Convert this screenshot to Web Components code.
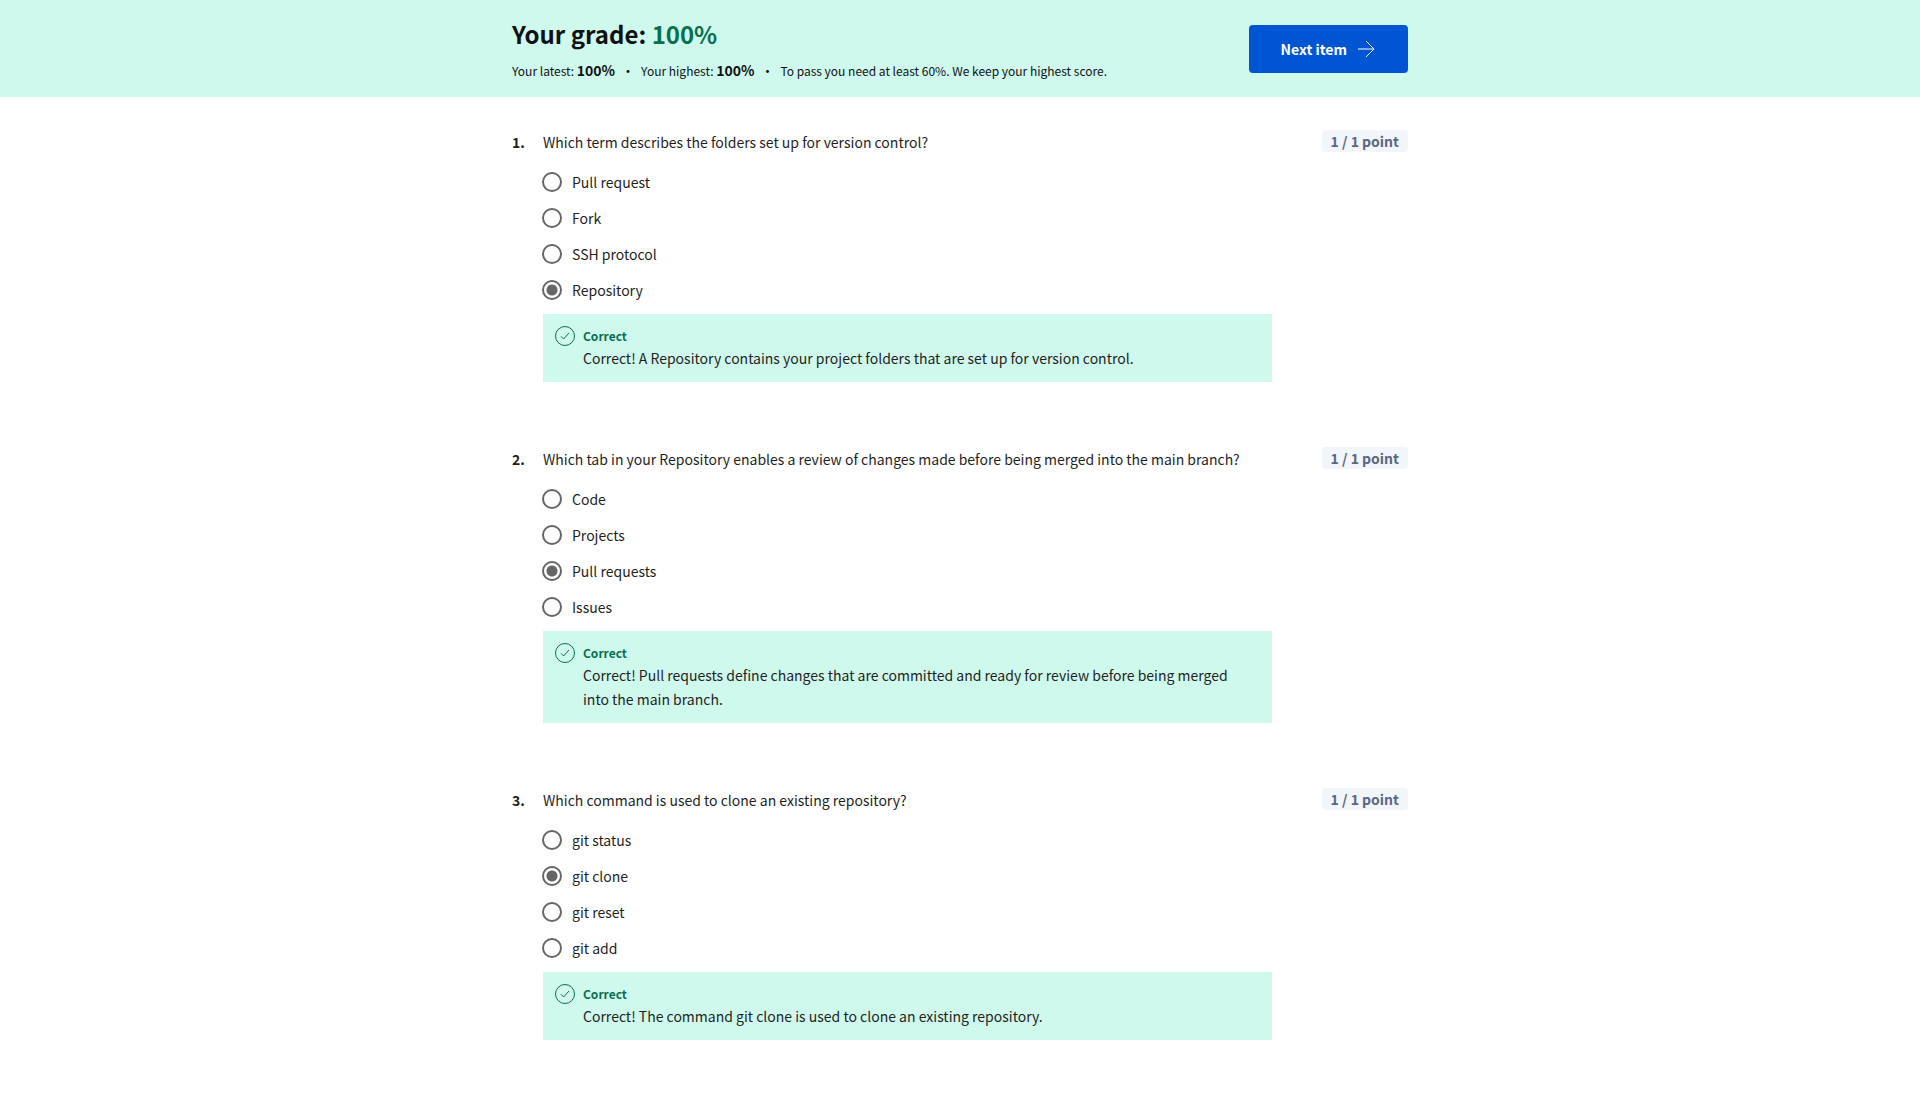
<!DOCTYPE html>
<html lang="en">
<head>
<meta charset="utf-8">
<title>Your grade: 100%</title>
<style>
  body {
    margin: 0;
    background: #fff;
    color: #1f1f1f;
    font: 14px/24px "Noto Sans CJK SC", "Noto Sans", sans-serif;
    --mint: #d0f9ed;
    --green: #087051;
    --ink: #0f1114;
    --blue: #0056d2;
    --page: 896px;
  }
  grade-header strong { font-size: 14px; line-height: 16px; }
</style>
</head>
<body>
<grade-header grade="100%">
  <span>Your latest: <strong>100%</strong></span>
  <span>Your highest: <strong>100%</strong></span>
  <span>To pass you need at least 60%. We keep your highest score.</span>
</grade-header>
<quiz-list>
  <quiz-question number="1" prompt="Which term describes the folders set up for version control?" options="Pull request|Fork|SSH protocol|Repository" selected="Repository">
    <quiz-feedback>Correct! A Repository contains your project folders that are set up for version control.</quiz-feedback>
  </quiz-question>
  <quiz-question number="2" prompt="Which tab in your Repository enables a review of changes made before being merged into the main branch?" options="Code|Projects|Pull requests|Issues" selected="Pull requests">
    <quiz-feedback>Correct! Pull requests define changes that are committed and ready for review before being merged into the main branch.</quiz-feedback>
  </quiz-question>
  <quiz-question number="3" prompt="Which command is used to clone an existing repository?" options="git status|git clone|git reset|git add" selected="git clone">
    <quiz-feedback>Correct! The command git clone is used to clone an existing repository.</quiz-feedback>
  </quiz-question>
</quiz-list>

<script>
class GradeHeader extends HTMLElement {
  connectedCallback() {
    const root = this.attachShadow({ mode: 'open' });
    root.innerHTML = `
      <style>
        :host { display: block; background: var(--mint); color: var(--ink); }
        header { display: flex; flex-wrap: wrap; align-items: center; justify-content: space-between; gap: 16px; max-width: var(--page); margin: 0 auto; padding: 16px 0 15px; }
        h1 { margin: 0; font-size: 24px; line-height: 36px; font-weight: 700; }
        h1 b { color: var(--green); font-weight: 700; }
        .facts { display: flex; flex-wrap: wrap; margin-top: 8px; font-size: 12px; line-height: 22px; }
        ::slotted(span:not(:first-child))::before { content: "•"; margin: 0 6px; font-size: 14px; line-height: 16px; }
      </style>
      <header>
        <div>
          <h1>Your grade: <b></b></h1>
          <div class="facts"><slot></slot></div>
        </div>
        <next-button>Next item</next-button>
      </header>`;
    root.querySelector('b').textContent = this.getAttribute('grade');
  }
}

class NextButton extends HTMLElement {
  connectedCallback() {
    this.attachShadow({ mode: 'open' }).innerHTML = `
      <style>
        :host { display: block; }
        button { display: flex; align-items: center; gap: 9px; height: 48px; padding: 0 32px; border: 0; border-radius: 4px; background: var(--blue); color: #fff; font: inherit; font-weight: 700; cursor: pointer; }
        svg { display: block; }
      </style>
      <button type="button"><slot></slot>
        <svg width="20" height="20" viewBox="0 0 20 20" fill="none" stroke="#fff" aria-hidden="true"><path d="M2 10h16M10 2l8 8-8 8"/></svg>
      </button>`;
  }
}

class QuizList extends HTMLElement {
  connectedCallback() {
    this.attachShadow({ mode: 'open' }).innerHTML = `
      <style>
        :host { display: block; }
        main { display: flex; flex-direction: column; gap: 65px; max-width: var(--page); margin: 0 auto; padding: 33px 0 64px; }
      </style>
      <main><slot></slot></main>`;
  }
}

class QuizQuestion extends HTMLElement {
  connectedCallback() {
    const root = this.attachShadow({ mode: 'open' });
    root.innerHTML = `
      <style>
        :host { display: block; }
        section { display: grid; grid-template-columns: 31px minmax(0, 1fr) 136px; }
        .number { font-weight: 700; }
        h2 { margin: 0; font-size: 14px; font-weight: 400; line-height: 24px; }
        .points { justify-self: end; align-self: start; padding: 0 9px; border-radius: 4px; background: #f2f5fa; color: #5b6780; font-weight: 700; line-height: 22px; }
        .answers { grid-column: 2; margin-left: -1px; padding: 10px 0 6px; }
        label { display: flex; align-items: center; gap: 10px; width: fit-content; min-height: 36px; }
        input { appearance: none; box-sizing: border-box; width: 20px; height: 20px; margin: 0; border: 2px solid #666; border-radius: 50%; background: #fff; }
        input:checked { background: radial-gradient(circle, #666 5px, #fff 6px); }
        .feedback { grid-column: 2; }
      </style>
      <section>
        <span class="number"></span>
        <h2 id="prompt"></h2>
        <span class="points">1 / 1 point</span>
        <div class="answers" role="radiogroup" aria-labelledby="prompt"></div>
        <div class="feedback"><slot></slot></div>
      </section>`;
    root.querySelector('.number').textContent = this.getAttribute('number') + '.';
    root.querySelector('h2').textContent = this.getAttribute('prompt');
    const answers = root.querySelector('.answers');
    this.getAttribute('options').split('|').forEach((text) => {
      const label = document.createElement('label');
      const input = document.createElement('input');
      input.type = 'radio';
      input.name = 'answer';
      input.value = text;
      input.checked = text === this.getAttribute('selected');
      const caption = document.createElement('span');
      caption.textContent = text;
      label.append(input, caption);
      answers.append(label);
    });
  }
}

class QuizFeedback extends HTMLElement {
  connectedCallback() {
    this.attachShadow({ mode: 'open' }).innerHTML = `
      <style>
        :host { display: flex; gap: 8px; padding: 12px 24px 12px 12px; background: var(--mint); }
        svg { flex: none; display: block; }
        strong { display: block; color: var(--green); font-size: 12px; line-height: 20px; }
        p { margin: 0; line-height: 24px; }
      </style>
      <svg width="20" height="20" viewBox="0 0 20 20" fill="none" stroke="#087051" aria-hidden="true"><circle cx="10" cy="10" r="9.5"/><path d="M6 10.3l2.6 2.7L14 7"/></svg>
      <div><strong>Correct</strong><p><slot></slot></p></div>`;
  }
}

customElements.define('next-button', NextButton);
customElements.define('grade-header', GradeHeader);
customElements.define('quiz-feedback', QuizFeedback);
customElements.define('quiz-question', QuizQuestion);
customElements.define('quiz-list', QuizList);
</script>
</body>
</html>
